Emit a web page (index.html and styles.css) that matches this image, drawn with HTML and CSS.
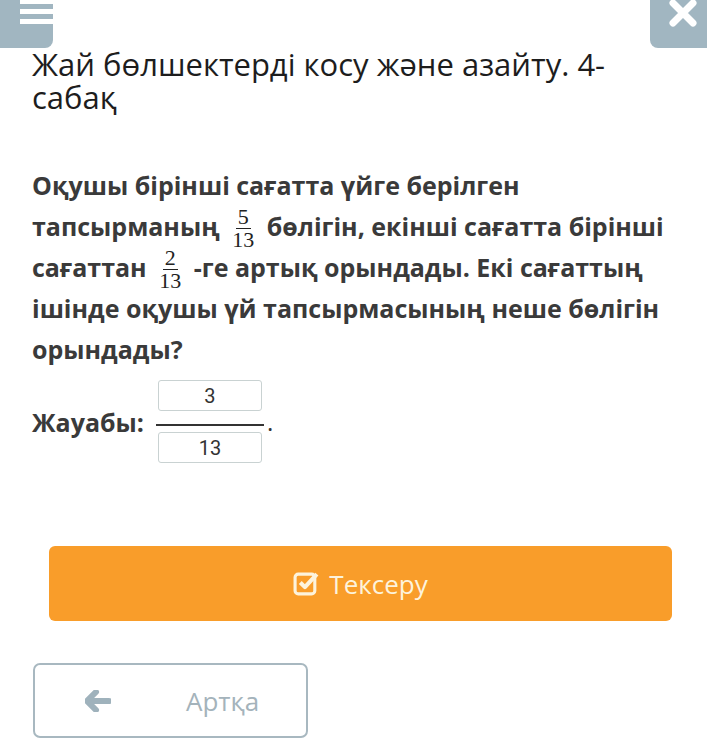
FILE: index.html
```html
<!DOCTYPE html>
<html lang="kk">
<head>
    <meta charset="UTF-8">
    <meta name="viewport" content="width=device-width, initial-scale=1.0">
    <title>Жай бөлшектерді косу және азайту</title>
    <link rel="stylesheet" href="styles.css">
</head>
<body>
    <div class="topbar">
        <button class="corner menu-btn" aria-label="Мәзір">
            <span></span><span></span><span></span>
        </button>
        <button class="corner close-btn" aria-label="Жабу">
            <svg width="30" height="28" viewBox="0 0 30 28">
                <path d="M5 3 L25 23 M25 3 L5 23" stroke="#fff" stroke-width="7" stroke-linecap="round"/>
            </svg>
        </button>
    </div>

    <h1 class="title">Жай бөлшектерді косу және азайту. 4-сабақ</h1>

    <p class="question">
        Оқушы бірінші сағатта үйге берілген
        тапсырманың <span class="frac"><span class="num">5</span><span class="den">13</span></span> бөлігін, екінші сағатта бірінші
        сағаттан <span class="frac"><span class="num">2</span><span class="den">13</span></span> -ге артық орындады. Екі сағаттың
        ішінде оқушы үй тапсырмасының неше бөлігін
        орындады?
    </p>

    <div class="answer">
        <span class="answer-label">Жауабы:</span>
        <div class="answer-frac">
            <input class="answer-box" type="text" value="3">
            <div class="answer-bar"></div>
            <input class="answer-box" type="text" value="13">
        </div>
        <span class="dot">.</span>
    </div>

    <button class="check-btn">
        <svg width="27" height="27" viewBox="0 0 26 26">
            <rect x="2" y="4" width="19" height="19" rx="3" fill="none" stroke="#fdf3dc" stroke-width="3"/>
            <path d="M7 12 L11.5 16.5 L23 4" fill="none" stroke="#fdf3dc" stroke-width="4" stroke-linejoin="round"/>
        </svg>
        Тексеру
    </button>

    <button class="back-btn">
        <svg width="26" height="22" viewBox="0 0 26 22">
            <path d="M11 2 L2 11 L11 20 M3 11 L24 11" fill="none" stroke="#9fb2bc" stroke-width="6" stroke-linecap="round" stroke-linejoin="round"/>
        </svg>
        <span>Артқа</span>
    </button>
</body>
</html>
```

FILE: styles.css
```css
body {
    margin: 0;
    background: #fff;
    font-family: 'Open Sans', 'Noto Sans', sans-serif;
    color: #222;
    padding-bottom: 12px;
}

.topbar {
    display: flex;
    justify-content: space-between;
    height: 48px;
}

.corner {
    border: none;
    background: #a1b6c1;
    height: 48px;
    padding: 0;
    cursor: pointer;
}

.menu-btn {
    width: 53px;
    border-bottom-right-radius: 8px;
    display: flex;
    flex-direction: column;
    align-items: flex-end;
    justify-content: flex-start;
    gap: 5px;
}

.menu-btn span {
    display: block;
    width: 33px;
    height: 5px;
    background: #fff;
}

.menu-btn span:first-child {
    height: 4px;
}

.close-btn {
    width: 57px;
    border-bottom-left-radius: 8px;
    display: flex;
    justify-content: center;
    align-items: flex-start;
    padding-left: 8px;
}

.title {
    margin: 0;
    padding: 0 80px 0 32px;
    font-size: 31px;
    font-weight: 400;
    line-height: 33px;
    color: #1d1d1d;
}

.question {
    margin: 51px 0 0;
    padding: 0 28px 0 32px;
    font-size: 25px;
    font-weight: 700;
    line-height: 41px;
    color: #3a3a3a;
}

.frac {
    display: inline-flex;
    flex-direction: column;
    align-items: center;
    vertical-align: middle;
    margin: -8px 4px -7px;
    font-family: 'Liberation Serif', 'DejaVu Serif', serif;
    font-weight: 400;
    font-size: 22px;
    line-height: 22px;
    color: #222;
}

.frac .num {
    padding: 0 2px;
    border-bottom: 1.5px solid #222;
}

.frac .den {
    padding: 0 2px;
}

.answer {
    display: flex;
    align-items: center;
    padding: 0 32px;
    margin-top: 10px;
}

.answer-label {
    font-size: 25px;
    font-weight: 700;
    color: #3a3a3a;
    margin-right: 12px;
}

.answer-frac {
    display: flex;
    flex-direction: column;
    align-items: center;
    width: 108px;
}

.answer-box {
    width: 104px;
    height: 31px;
    box-sizing: border-box;
    border: 1px solid #c9d2d2;
    border-radius: 3px;
    text-align: center;
    font-family: Roboto, sans-serif;
    font-size: 20px;
    color: #333;
    padding: 0;
}

.answer-bar {
    width: 108px;
    height: 2px;
    background: #333;
    margin: 13px 0 6px;
}

.dot {
    font-size: 24px;
    color: #333;
    margin-left: 3px;
}

.check-btn {
    display: flex;
    justify-content: center;
    align-items: center;
    gap: 9px;
    width: 623px;
    height: 75px;
    margin: 83px 0 0 49px;
    border: none;
    border-radius: 6px;
    background: #f99d2a;
    color: #fdf3dc;
    font-family: 'Open Sans', sans-serif;
    font-size: 26px;
    cursor: pointer;
}

.back-btn {
    display: flex;
    align-items: center;
    width: 275px;
    height: 75px;
    margin: 42px 0 0 33px;
    border: 2px solid #a8b8c0;
    border-radius: 7px;
    background: #fff;
    color: #a4b3bb;
    font-family: 'Open Sans', sans-serif;
    font-size: 26px;
    padding: 0 0 0 50px;
    cursor: pointer;
}

.back-btn span {
    margin-left: 75px;
}
```
